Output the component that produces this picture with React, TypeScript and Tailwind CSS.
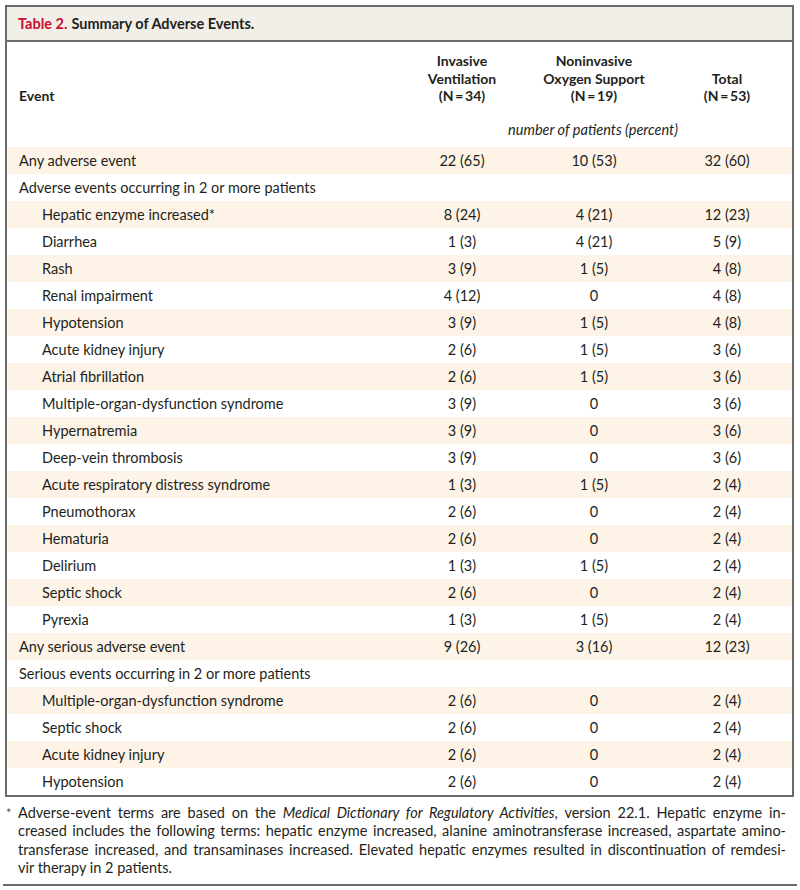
const rows: { label: string; indent?: boolean; a?: string; b?: string; c?: string }[] = [
  { label: "Any adverse event", a: "22 (65)", b: "10 (53)", c: "32 (60)" },
  { label: "Adverse events occurring in 2 or more patients" },
  { label: "Hepatic enzyme increased*", indent: true, a: "8 (24)", b: "4 (21)", c: "12 (23)" },
  { label: "Diarrhea", indent: true, a: "1 (3)", b: "4 (21)", c: "5 (9)" },
  { label: "Rash", indent: true, a: "3 (9)", b: "1 (5)", c: "4 (8)" },
  { label: "Renal impairment", indent: true, a: "4 (12)", b: "0", c: "4 (8)" },
  { label: "Hypotension", indent: true, a: "3 (9)", b: "1 (5)", c: "4 (8)" },
  { label: "Acute kidney injury", indent: true, a: "2 (6)", b: "1 (5)", c: "3 (6)" },
  { label: "Atrial fibrillation", indent: true, a: "2 (6)", b: "1 (5)", c: "3 (6)" },
  { label: "Multiple-organ-dysfunction syndrome", indent: true, a: "3 (9)", b: "0", c: "3 (6)" },
  { label: "Hypernatremia", indent: true, a: "3 (9)", b: "0", c: "3 (6)" },
  { label: "Deep-vein thrombosis", indent: true, a: "3 (9)", b: "0", c: "3 (6)" },
  { label: "Acute respiratory distress syndrome", indent: true, a: "1 (3)", b: "1 (5)", c: "2 (4)" },
  { label: "Pneumothorax", indent: true, a: "2 (6)", b: "0", c: "2 (4)" },
  { label: "Hematuria", indent: true, a: "2 (6)", b: "0", c: "2 (4)" },
  { label: "Delirium", indent: true, a: "1 (3)", b: "1 (5)", c: "2 (4)" },
  { label: "Septic shock", indent: true, a: "2 (6)", b: "0", c: "2 (4)" },
  { label: "Pyrexia", indent: true, a: "1 (3)", b: "1 (5)", c: "2 (4)" },
  { label: "Any serious adverse event", a: "9 (26)", b: "3 (16)", c: "12 (23)" },
  { label: "Serious events occurring in 2 or more patients" },
  { label: "Multiple-organ-dysfunction syndrome", indent: true, a: "2 (6)", b: "0", c: "2 (4)" },
  { label: "Septic shock", indent: true, a: "2 (6)", b: "0", c: "2 (4)" },
  { label: "Acute kidney injury", indent: true, a: "2 (6)", b: "0", c: "2 (4)" },
  { label: "Hypotension", indent: true, a: "2 (6)", b: "0", c: "2 (4)" },
];

const cols = "grid grid-cols-[391px_128px_136px_1fr]";

export default function App() {
  return (
    <div className="h-[890px] w-[800px] bg-white font-['Lato',sans-serif] text-[14.5px] text-[#231f20]">
      <div className="pt-[5px] pl-[5px]">
        <div className="w-[789px] border-2 border-[#6b6b6b]">
          <div className="flex h-[35px] items-center border-b-2 border-[#6b6b6b] bg-[#f2eee8] pl-[11px] pt-[1px] text-[14.5px] font-bold">
            <span className="text-[#c8102e]">Table 2.</span>
            <span className="ml-[4px]">Summary of Adverse Events.</span>
          </div>

          <div className="h-[105px] pt-[10px]">
            <div className={`${cols} items-end text-[14px] font-bold leading-[17.5px]`}>
              <div className="pl-[12px]">Event</div>
              <div className="text-center">
                Invasive
                <br />
                Ventilation
                <br />
                (N{"\u2009=\u2009"}34)
              </div>
              <div className="text-center">
                Noninvasive
                <br />
                Oxygen Support
                <br />
                (N{"\u2009=\u2009"}19)
              </div>
              <div className="text-center">
                Total
                <br />
                (N{"\u2009=\u2009"}53)
              </div>
            </div>
            <div className={`${cols} mt-[16px] leading-[18px]`}>
              <div />
              <div className="col-span-3 pr-[4px] text-center italic">number of patients (percent)</div>
            </div>
          </div>

          {rows.map((r, i) => (
            <div
              key={i}
              className={`${cols} h-[27px] items-center ${i % 2 === 0 ? "bg-[#fdf3e6]" : "bg-white"}`}
            >
              <div className={r.indent ? "pl-[35px]" : "pl-[12px]"}>{r.label}</div>
              <div className="text-center">{r.a}</div>
              <div className="text-center">{r.b}</div>
              <div className="text-center">{r.c}</div>
            </div>
          ))}
        </div>
      </div>

      <div className="mt-[7px] flex pl-[6px] pr-[14px] leading-[18.4px]">
        <span className="w-[12px] shrink-0 text-[13px] text-[#555]">*</span>
        <div className="flex-1">
          <div className="text-justify [text-align-last:justify]">
            Adverse-event terms are based on the <i>Medical Dictionary for Regulatory Activities</i>, version 22.1. Hepatic enzyme in-
          </div>
          <div className="text-justify [text-align-last:justify]">
            creased includes the following terms: hepatic enzyme increased, alanine aminotransferase increased, aspartate amino-
          </div>
          <div className="text-justify [text-align-last:justify]">
            transferase increased, and transaminases increased. Elevated hepatic enzymes resulted in discontinuation of remdesi-
          </div>
          <div>vir therapy in 2 patients.</div>
        </div>
      </div>

      <div className="mx-[3px] mt-[6px] h-[2px] bg-[#6b6b6b]" />
    </div>
  );
}
